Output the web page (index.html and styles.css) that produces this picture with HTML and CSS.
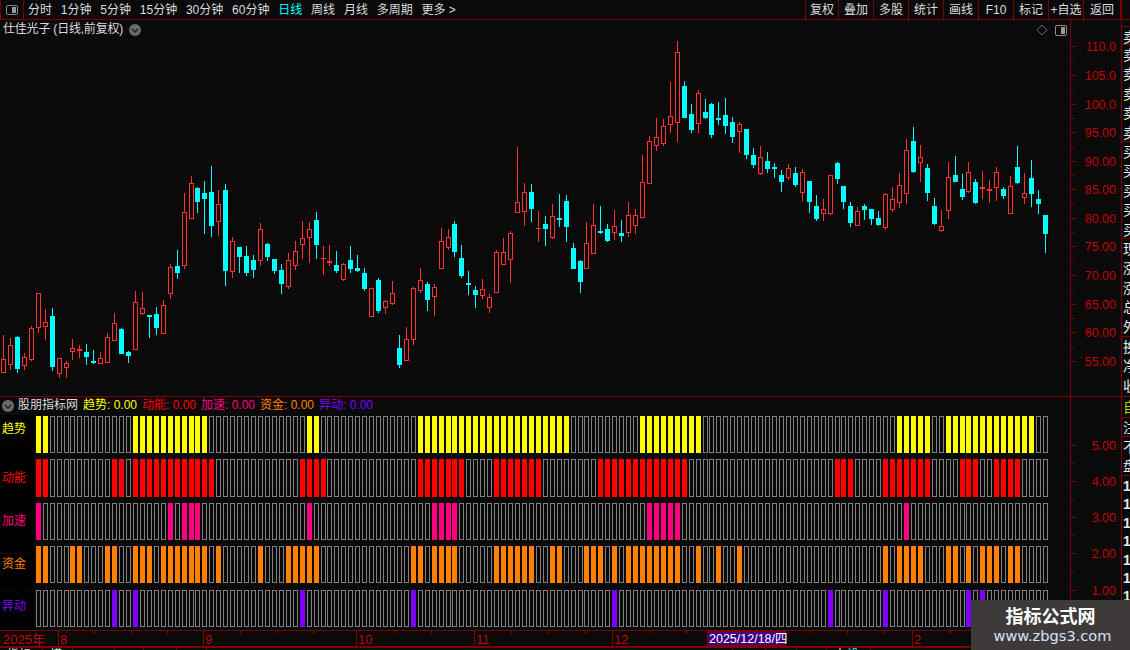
FILE: index.html
```html
<!DOCTYPE html>
<html lang="zh-CN">
<head>
<meta charset="utf-8">
<title>仕佳光子</title>
<link rel="stylesheet" href="styles.css">
</head>
<body>
<div class="app">
  <header class="toolbar">
    <button class="panel-btn" aria-label="panel">
      <svg width="12" height="10" viewBox="0 0 12 10"><rect x=".5" y=".5" width="11" height="9" rx="1.5" class="panel-frame"/><rect x="6" y="2" width="4" height="6" class="panel-fill"/></svg>
    </button>
    <nav class="periods">
      <span>分时</span><span>1分钟</span><span>5分钟</span><span>15分钟</span><span>30分钟</span><span>60分钟</span><span class="active">日线</span><span>周线</span><span>月线</span><span>多周期</span><span>更多 &gt;</span>
    </nav>
    <nav class="actions">
      <span class="first">复权</span><span>叠加</span><span>多股</span><span>统计</span><span>画线</span><span>F10</span><span>标记</span><span>+自选</span><span class="last">返回</span>
    </nav>
  </header>
  <div class="workspace">
    <main class="charts">
      <section class="price-panel">
        <svg id="price" class="plot" width="1121" height="377" viewBox="0 20 1121 377"></svg>
        <div class="title-row">
          <span class="stock-name">仕佳光子 (日线,前复权)</span>
          <svg class="chevron" width="12" height="12" viewBox="0 0 12 12"><circle cx="6" cy="6" r="6" class="chev-bg"/><path d="M3 5l3 3 3-3" class="chev-line"/></svg>
        </div>
        <div class="corner-tools">
          <svg width="12" height="12" viewBox="0 0 12 12"><path d="M6 1l5 5-5 5-5-5z" class="diamond"/></svg>
          <svg width="12" height="11" viewBox="0 0 12 11"><rect x=".5" y=".5" width="11" height="10" rx="1.5" class="panel-frame"/><rect x="6" y="2" width="4" height="7" class="panel-fill"/></svg>
        </div>
      </section>
      <section class="indicator-panel">
        <svg id="indicator" class="plot" width="1121" height="233" viewBox="0 397 1121 233"></svg>
        <div class="indicator-head">
          <svg class="chevron" width="12" height="12" viewBox="0 0 12 12"><circle cx="6" cy="6" r="6" class="chev-bg"/><path d="M3 5l3 3 3-3" class="chev-line"/></svg>
          <span class="ind-name">股朋指标网</span>
          <span class="ind yellow">趋势: 0.00</span>
          <span class="ind red">动能: 0.00</span>
          <span class="ind pink">加速: 0.00</span>
          <span class="ind orange">资金: 0.00</span>
          <span class="ind purple">异动: 0.00</span>
        </div>
      </section>
      <svg id="time" class="time-axis" width="1121" height="17" viewBox="0 630 1121 17"></svg>
      <div class="tabs">
        <span class="t1">指标</span><span class="t2">模</span><span class="t3"></span><span class="t4"></span><span class="t5"></span><span class="t6"></span>
        <span class="t7"></span><span class="t8"></span><span class="t9"></span><span class="t10"></span><span class="t11">十</span><span class="t12 cyan">设置</span>
      </div>
    </main>
    <aside class="side">
      <div class="s-group g-a">卖</div>
      <div class="s-group g-b">卖<br>卖<br>卖<br>卖<br>卖</div>
      <div class="s-group g-b">买<br>买<br>买<br>买<br>买</div>
      <div class="s-group g-c">现<br>涨<br>涨<br>总<br>外</div>
      <div class="s-group g-d">换<br>净<br>收</div>
      <div class="s-group g-e gold">自</div>
      <div class="s-group g-f">注</div>
      <div class="s-group g-g">不<br>盘</div>
      <div class="s-group g-h">1<br>1<br>1<br>1<br>1<br>1<br>1<br>1<br>1</div>
    </aside>
  </div>
  <div class="watermark">
    <strong>指标公式网</strong>
    <span>www.zbgs3.com</span>
  </div>
</div>
<script src="chart.js"></script>
</body>
</html>
```
FILE: styles.css
```css
* { box-sizing: border-box; }
html, body { margin: 0; padding: 0; height: 100%; background: #0a0a0a; overflow: hidden; }
body { font-family: "Liberation Sans", "Noto Sans CJK SC", sans-serif; font-size: 12px; color: #dcdcdc; }
.app { position: relative; width: 1130px; height: 650px; overflow: hidden; display: flex; flex-direction: column; }

.toolbar { height: 20px; display: flex; border-bottom: 1px solid #800000; flex: none; }
.panel-btn { width: 24px; height: 19px; padding: 0; background: none; border: 0; border-left: 1px solid #800000; border-right: 1px solid #800000; display: flex; align-items: center; justify-content: center; }
.panel-frame { fill: none; stroke: #8a8a8a; }
.panel-fill { fill: #9a9a9a; }
.periods { display: flex; gap: 8.8px; padding-left: 4px; padding-top: 1px; line-height: 18px; white-space: nowrap; flex: 1; }
.periods .active { color: #00ffff; }
.actions { display: flex; width: 316px; margin-right: 9px; line-height: 20px; white-space: nowrap; }
.actions span { width: 35px; text-align: center; border-left: 1px solid #800000; }
.actions .first { width: 33px; }
.actions .last { width: 38px; border-right: 1px solid #800000; }

.workspace { flex: 1; display: flex; min-height: 0; }
.charts { width: 1121px; flex: none; display: flex; flex-direction: column; }
.plot { display: block; }
.price-panel, .indicator-panel { position: relative; flex: none; }
.title-row { position: absolute; left: 3px; top: 1px; display: flex; align-items: center; gap: 6px; line-height: 17px; }
.stock-name { letter-spacing: -0.2px; }
.corner-tools { position: absolute; left: 1036px; top: 4px; display: flex; gap: 7px; align-items: center; }
.chev-bg { fill: #6a6a6a; }
.chev-line { fill: none; stroke: #1c1c1c; stroke-width: 1.4; }
.diamond { fill: none; stroke: #666; }

.indicator-head { position: absolute; left: 2px; top: 0; height: 17px; display: flex; align-items: center; line-height: 17px; white-space: nowrap; }
.ind-name { margin-left: 4px; width: 65px; }
.ind { width: 59px; }
.yellow { color: #ffff00; }
.red { color: #ff0000; }
.pink { color: #ff0080; }
.orange { color: #ff8000; }
.purple { color: #8000ff; }

.grid { stroke: #5a0000; stroke-width: 1; stroke-dasharray: 1 4; }
.axis { stroke: #800000; stroke-width: 1; }
.up-wick { stroke: #ff3232; }
.up-body { fill: #0a0a0a; stroke: #ff3232; }
.down { fill: #00ffff; stroke: none; }
.down-wick { stroke: #00ffff; }
.cell { fill: none; stroke: #808080; }
.left-strip { fill: #000; }
.axis-label { fill: #c40000; font: 12.5px "Liberation Sans", sans-serif; text-anchor: end; }
.row-label { font: 12px "Noto Sans CJK SC", sans-serif; }
.time-label { fill: #c40000; font: 13px "Liberation Sans", "Noto Sans CJK SC", sans-serif; }
.date-box { fill: #400080; stroke: #800000; }
.date-label { fill: #fff; font: 12.5px "Liberation Sans", "Noto Sans CJK SC", sans-serif; }
.time-axis { display: block; flex: none; }

.tabs { flex: none; height: 3px; border-top: 1px solid #800000; display: flex; overflow: hidden; font-size: 12px; line-height: 14px; color: #ddd; }
.tabs span { flex: none; padding-left: 7px; border-right: 1px solid #800000; }
.tabs .cyan { color: #00ffff; }
.t1 { width: 43px; } .t2 { width: 30px; } .t3 { width: 42px; } .t4 { width: 29px; } .t5 { width: 33px; } .t6 { width: 30px; }
.t7 { width: 526px; } .t8 { width: 33px; } .t9 { width: 31px; } .t10 { width: 30px; } .t11 { width: 13px; } .t12 { width: 31px; }

.side { width: 9px; flex: none; border-left: 1px solid #800000; overflow: hidden; font-size: 14px; color: #e8e8e8; margin-top: -20px; padding-top: 26px; font-family: "Noto Sans CJK SC", sans-serif; }
.s-group { border-bottom: 1px solid #800000; padding-left: 1px; white-space: nowrap; line-height: 19.4px; }
.s-group:first-child { border-top: 1px solid #800000; }
.g-a { height: 19px; }
.g-b { height: 97px; }
.g-c { height: 98px; }
.g-d { height: 60px; }
.g-e { height: 21px; }
.g-f { height: 19px; }
.g-g { height: 39px; }
.g-h { border: 0; line-height: 18.4px; font-family: "Liberation Sans", sans-serif; font-weight: 700; padding-top: 1px; }
.gold { color: #c8c800; }

.watermark { position: absolute; left: 971px; top: 600px; width: 159px; height: 50px; background: #3f3a3a; display: flex; flex-direction: column; align-items: center; color: #fff; }
.watermark strong { font-size: 18px; line-height: 30px; font-family: "Noto Sans CJK SC", sans-serif; }
.watermark span { font: 14.6px/18px "DejaVu Sans", sans-serif; color: #d4e2ff; margin-top: -3px; padding-left: 4px; }
```
FILE: chart.js
```js
var candles = [
["r",359,372,335,372],["r",345,364,338,369],["c",337,368,336,372],["r",357,365,353,369],["r",328,359,326,360],
["r",293,327,293,332],["r",322,326,309,339],["c",316,366,308,370],["r",358,373,358,377],["r",363,367,361,377],
["r",348,351,339,359],["r",349,351,345,357],["c",352,356,344,364],["c",361,362,350,363],["r",358,363,352,363],
["r",337,362,333,362],["r",323,340,313,340],["c",329,353,328,353],["c",352,355,351,362],["r",302,349,291,349],
["r",308,313,292,314],["c",315,316,315,337],["c",314,327,307,334],["r",305,333,300,333],["r",267,293,264,298],
["c",266,272,250,278],["r",212,265,193,268],["r",183,218,176,218],["c",188,201,187,212],["c",193,198,181,233],
["c",192,225,166,236],["r",204,221,190,235],["c",190,270,184,285],["r",241,271,237,277],["c",247,256,247,272],
["c",256,272,246,275],["c",260,269,255,277],["r",229,260,223,265],["c",244,256,243,260],["c",259,270,259,273],
["c",270,283,264,293],["r",260,286,253,288],["r",251,265,241,269],["r",238,244,221,258],["r",229,237,222,262],
["c",220,244,212,258],["r",258,259,246,274],["r",261,263,245,265],["c",265,270,251,272],["r",264,279,263,280],
["c",260,268,246,272],["c",268,270,255,271],["c",273,288,268,290],["r",288,316,288,316],["c",280,310,278,312],
["r",301,307,300,313],["r",293,303,281,304],["c",348,364,335,367],["r",339,360,327,360],["r",288,339,287,344],
["r",280,290,268,292],["c",284,299,282,310],["r",287,296,284,315],["r",241,268,228,268],["r",237,247,229,249],
["c",224,251,221,256],["c",258,275,245,277],["c",283,284,271,294],["c",290,294,286,307],["r",289,295,279,298],
["r",297,307,294,312],["r",252,292,250,292],["r",252,264,238,264],["r",233,259,231,282],["r",202,212,147,212],
["r",192,211,183,225],["c",192,208,184,221],["r",228,229,211,241],["c",224,228,216,245],["r",216,237,204,238],
["c",218,219,194,226],["c",201,226,195,241],["c",248,268,243,268],["c",261,281,260,292],["r",243,268,222,268],
["r",225,253,204,253],["c",231,232,206,233],["c",229,240,224,241],["r",226,232,210,239],["c",233,235,220,241],
["r",215,232,202,236],["r",215,225,209,233],["r",182,217,155,217],["r",141,183,136,183],["r",137,145,118,150],
["r",126,143,119,145],["r",116,124,82,132],["r",52,122,41,141],["c",86,117,81,117],["c",114,129,104,132],
["r",93,123,90,132],["c",112,117,99,118],["c",104,134,103,137],["c",118,119,102,124],["c",115,125,98,133],
["c",122,136,117,142],["r",124,131,122,152],["c",129,154,129,158],["c",155,164,148,167],["r",157,173,146,174],
["c",161,168,152,172],["c",167,168,163,177],["c",175,181,170,191],["r",168,177,164,179],["c",173,184,167,186],
["r",172,192,169,200],["c",181,201,181,212],["c",206,218,195,220],["r",209,213,199,220],["r",175,213,175,214],
["c",163,178,162,183],["c",186,201,186,208],["c",206,222,202,226],["r",211,225,207,225],["c",206,209,204,219],
["c",209,218,209,224],["c",218,224,211,225],["r",194,227,193,229],["r",199,209,187,211],["r",185,202,173,207],
["r",150,193,139,203],["c",141,171,127,172],["r",157,162,145,181],["c",168,192,164,200],["c",206,223,198,224],
["r",226,230,210,231],["r",177,210,162,218],["c",175,181,156,181],["c",189,196,174,199],["r",172,191,162,192],
["c",182,202,179,203],["r",187,189,171,198],["r",189,191,180,202],["r",172,187,167,200],["c",189,195,187,198],
["r",186,213,176,213],["c",167,182,146,183],["r",193,197,173,203],["c",178,193,160,206],["c",199,203,190,213],
["c",215,233,215,252]
];

var rows = [
  { label: "趋势", color: "#ffff00", labelY: 433, top: 416, bottom: 452, on: [[5,6],[19,29],[44,45],[60,81],[92,100],[129,133],[136,148]] },
  { label: "动能", color: "#ff0000", labelY: 482, top: 459, bottom: 496, on: [[5,6],[16,17],[19,30],[43,46],[60,66],[71,77],[86,98],[120,122],[127,133],[138,140],[143,146]] },
  { label: "加速", color: "#ff0080", labelY: 525, top: 503, bottom: 539, on: [[5,5],[24,24],[26,28],[44,44],[62,65],[93,97],[130,130]] },
  { label: "资金", color: "#ff8000", labelY: 568, top: 546, bottom: 582, on: [[5,6],[10,11],[15,16],[19,21],[23,29],[31,31],[37,37],[41,45],[59,60],[62,65],[71,76],[79,80],[84,86],[88,88],[90,97],[100,100],[103,103],[106,106],[127,127],[129,132],[136,137],[139,139],[141,143],[145,146]] },
  { label: "异动", color: "#8000ff", labelY: 610, top: 590, bottom: 626, on: [[16,16],[19,19],[43,43],[59,59],[88,88],[119,119],[127,127],[139,139],[141,141]] }
];

var priceTicks = [[46,"110.0"],[75,"105.0"],[104,"100.0"],[132,"95.00"],[161,"90.00"],[189,"85.00"],[218,"80.00"],[246,"75.00"],[275,"70.00"],[304,"65.00"],[332,"60.00"],[361,"55.00"]];
var indTicks = [[445,"5.00"],[481,"4.00"],[517,"3.00"],[553,"2.00"],[590,"1.00"]];

function cx(k) { return Math.floor(3.5 + 6.946 * k); }

function line(x1, y1, x2, y2, cls) {
  return '<line x1="' + x1 + '" y1="' + y1 + '" x2="' + x2 + '" y2="' + y2 + '" class="' + cls + '" shape-rendering="crispEdges"/>';
}
function rect(x, y, w, h, cls, fill) {
  return '<rect x="' + x + '" y="' + y + '" width="' + w + '" height="' + h + '"' +
    (cls ? ' class="' + cls + '"' : '') + (fill ? ' fill="' + fill + '"' : '') + ' shape-rendering="crispEdges"/>';
}
function axisLabel(y, text) {
  return '<text x="1116" y="' + (y + 5) + '" class="axis-label">' + text + '</text>';
}

function drawAxis(ticks, xEnd, top, bottom) {
  var s = "", i;
  for (i = 0; i < ticks.length; i++) {
    var y = ticks[i][0] + 0.5;
    s += line(0, y, xEnd, y, "grid");
    s += line(1071, y, 1076, y, "axis");
    s += axisLabel(ticks[i][0], ticks[i][1]);
    if (i < ticks.length - 1) {
      var m = Math.round((ticks[i][0] + ticks[i + 1][0]) / 2) + 0.5;
      s += line(1071, m, 1074, m, "axis");
    }
  }
  s += line(1070.5, top, 1070.5, bottom, "axis");
  return s;
}

function drawPrice() {
  var s = drawAxis(priceTicks, 1068, 20, 397);
  s += line(0, 396.5, 1121, 396.5, "axis");
  candles.forEach(function (c, k) {
    var x = cx(k), t = c[1], b = c[2], wt = c[3], wb = c[4];
    if (c[0] === "r") {
      s += line(x + 0.5, wt, x + 0.5, wb + 1, "up-wick");
      if (b - t <= 2) {
        s += rect(x - 2, t, 5, Math.max(1, b - t), "", "#ff3232");
      } else {
        s += rect(x - 1.5, t + 0.5, 4, b - t, "up-body");
      }
    } else {
      s += line(x + 0.5, wt, x + 0.5, wb + 1, "down-wick");
      s += rect(x - 2, t, 5, Math.max(1, b - t + 1), "down");
    }
  });
  document.getElementById("price").innerHTML = s;
}

function drawIndicator() {
  var s = rect(0, 415, 34, 215, "left-strip");
  s += drawAxis(indTicks, 1068, 397, 630);
  rows.forEach(function (r) {
    for (var k = 5; k <= 150; k++) {
      var filled = r.on.some(function (a) { return k >= a[0] && k <= a[1]; });
      var x = cx(k) - 2;
      if (filled) {
        s += rect(x, r.top, 5, r.bottom - r.top + 1, "", r.color);
      } else {
        s += rect(x + 0.5, r.top + 0.5, 4, r.bottom - r.top, "cell");
      }
    }
    s += '<text x="2" y="' + r.labelY + '" class="row-label" fill="' + r.color + '">' + r.label + '</text>';
  });
  document.getElementById("indicator").innerHTML = s;
}

function drawTime() {
  var s = line(0, 630.5, 1121, 630.5, "axis") + line(0, 646.5, 1121, 646.5, "axis");
  var minor = [94, 131, 167, 240, 277, 313, 394, 431, 511, 548, 585, 650, 686, 810, 847, 884, 950, 987, 1024];
  minor.forEach(function (x) { s += line(x + 0.5, 630, x + 0.5, 634, "axis"); });
  var major = [[58, "8"], [203, "9"], [356, "10"], [474, "11"], [612, "12"], [912, "2"]];
  s += '<text x="3" y="644" class="time-label">2025年</text>';
  major.forEach(function (m) {
    s += line(m[0] + 0.5, 630, m[0] + 0.5, 646, "axis");
    s += '<text x="' + (m[0] + 2) + '" y="644" class="time-label">' + m[1] + '</text>';
  });
  s += line(1070.5, 630, 1070.5, 646, "axis");
  s += rect(707.5, 631.5, 78, 14, "date-box");
  s += '<text x="709" y="643" class="date-label">2025/12/18/四</text>';
  document.getElementById("time").innerHTML = s;
}

drawPrice();
drawIndicator();
drawTime();
```
